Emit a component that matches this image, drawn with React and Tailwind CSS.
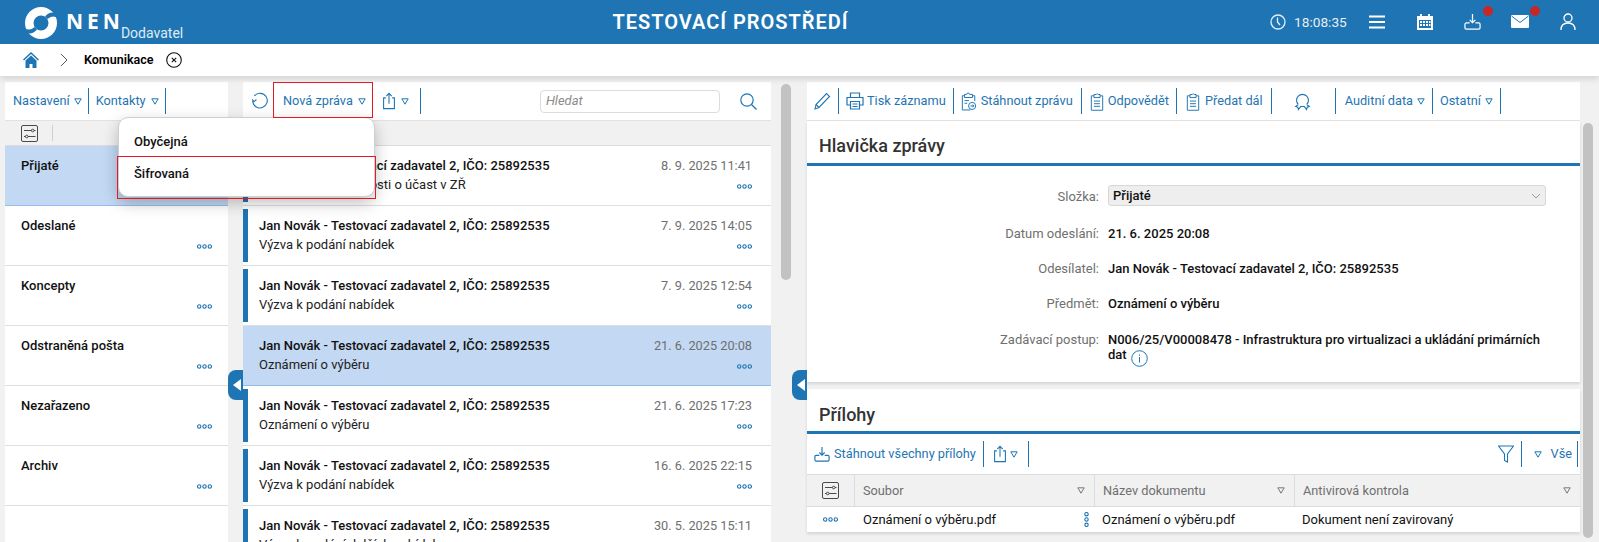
import React from "react";

const Tri = ({ className = "", color = "#1f75b3" }) => (
  <svg width="8" height="7" viewBox="0 0 8 7" className={className}>
    <path d="M.8.8h6.400L4 6.200z" fill="none" stroke={color} strokeWidth="1" />
  </svg>
);
const Sep = ({ className = "mx-[7px]" }) => <span className={`h-[26px] w-px shrink-0 bg-[#1f75b3] ${className}`} />;
const Dots = ({ className = "" }) => (
  <svg width="15" height="5" viewBox="0 0 15 5" className={className}>
    {[2.2, 7.5, 12.8].map((x) => (
      <circle key={x} cx={x} cy="2.5" r="1.7" fill="none" stroke="#1f75b3" strokeWidth="1.1" />
    ))}
  </svg>
);
const Share = ({ s = 20 }) => (
  <svg width={s} height={s} viewBox="0 0 20 20" fill="none" stroke="#1f75b3" strokeWidth="1.2">
    <path d="M6.5 6.5H4v12h12v-12h-2.500M10 13V1.500M7 4.500l3-3 3 3" />
  </svg>
);
const Sliders = () => (
  <svg width="17" height="17" viewBox="0 0 17 17" fill="none" stroke="#4a4a4a" strokeWidth="1">
    <rect x="0.5" y="0.5" width="16" height="16" rx="1.5" />
    <path d="M3 5.500h7.500M13 5.500h1.500M3 11.500h1.500M7 11.500h7.500" />
    <circle cx="11.7" cy="5.5" r="1.3" />
    <circle cx="5.7" cy="11.5" r="1.3" />
  </svg>
);
const Clip = ({ arrow }) => (
  <svg width={arrow ? 16 : 14} height="19" viewBox={arrow ? "0 0 18 21" : "0 0 16 21"} fill="none" stroke="#1f75b3" strokeWidth="1.100">
    {arrow ? (
      <>
        <path d="M4 4H1.500v16h9M13 4h2.500v6M4 2.500h2.500a1.500 1.500 0 0 1 3 0H13V6H4z" />
        <path d="M4 9.500h5M4 12.500h3" />
        <circle cx="12.500" cy="15.500" r="4" fill="#fff" />
        <path d="M10.500 15.500h4M13 14l1.500 1.500L13 17" />
      </>
    ) : (
      <>
        <path d="M4.500 4H1.500v16.500h13V4h-3M4.500 2.500H7a1.300 1.300 0 0 1 2.400 0h2.100V6h-7z" />
        <path d="M4.500 10h7M4.500 13h7M4.500 16h7" />
      </>
    )}
  </svg>
);
const Ribbon = () => (
  <svg width="17" height="19" viewBox="0 0 20 22" fill="none" stroke="#1f75b3" strokeWidth="1.3">
    <path d="M5 14.500a7 7 0 1 1 10 0M5 14.500 2 17l2.500.7.7 2.800 3-4M15 14.500l3 2.500-2.500.7-.7 2.800-3-4M8.200 16.500c1.200.4 2.400.4 3.600 0" />
  </svg>
);
const Tray = ({ color = "#1f75b3", s = 18 }) => (
  <svg width={s} height={s} viewBox="0 0 18 18" fill="none" stroke={color} strokeWidth="1.3">
    <path d="M9 1v9M6 7.300 9 10.300l3-3M6 10.500H2.500a1.500 1.500 0 0 0-1.500 1.500v3.500A1.500 1.500 0 0 0 2.500 17h13a1.500 1.500 0 0 0 1.500-1.500V12a1.500 1.500 0 0 0-1.500-1.500H12" />
  </svg>
);

const folders = ["Přijaté", "Odeslané", "Koncepty", "Odstraněná pošta", "Nezařazeno", "Archiv"];
const sender = "Jan Novák - Testovací zadavatel 2, IČO: 25892535";
const msgs = [
  [sender, "8. 9. 2025 11:41", "Výzva k podání žádosti o účast v ZŘ"],
  [sender, "7. 9. 2025 14:05", "Výzva k podání nabídek"],
  [sender, "7. 9. 2025 12:54", "Výzva k podání nabídek"],
  [sender, "21. 6. 2025 20:08", "Oznámení o výběru", true],
  [sender, "21. 6. 2025 17:23", "Oznámení o výběru"],
  [sender, "16. 6. 2025 22:15", "Výzva k podání nabídek"],
  [sender, "30. 5. 2025 15:11", "Výzva k podání dalších nabídek"],
];

const Row = ({ label, children, top = false }) => (
  <div className={`flex ${top ? "items-start pt-[4px]" : "items-center"} min-h-[20px]`}>
    <div className="w-[301px] shrink-0 pr-[9px] text-right leading-[15px] text-[#6f6f6f]">{label}</div>
    <div className="flex-1 leading-[15px] font-medium text-[#111]">{children}</div>
  </div>
);

const Collapse = () => (
  <div className="absolute z-10 flex h-[30px] w-[15px] items-center justify-center rounded-l-[8px] bg-[#1f75b3]">
    <span className="ml-[3px] h-0 w-0 border-y-[6px] border-r-[8px] border-y-transparent border-r-white" />
  </div>
);

export default function App() {
  return (
    <div className="relative h-[542px] w-[1599px] overflow-hidden bg-[#f1f1f1] font-['Roboto',sans-serif] text-[13px] text-[#111]">
      <header className="relative flex h-[44px] items-center bg-[#1f75b3] text-white">
        <div className="flex w-[400px] items-center pl-[24px]">
          <svg width="34" height="34" viewBox="0 0 34 34" className="mt-[1px]">
            <path fillRule="evenodd" d="M17 1a16 16 0 1 1 0 32 16 16 0 0 1 0-32zM17 9.500a7.500 7.500 0 1 0 0 15 7.500 7.500 0 0 0 0-15z" fill="#fff" />
            <path d="M21 10.500Q27 3.500 35 9L34 12Q28 8.500 23.500 13z" fill="#1f75b3" />
            <path d="M13 23.500Q7 30.500-1 25L0 22Q6 25.500 10.500 21z" fill="#1f75b3" />
          </svg>
          <span className="ml-[8px] font-['Open_Sans',sans-serif] text-[21px] font-bold tracking-[4px]">NEN</span>
          <span className="mt-[21px] ml-[-3px] text-[14px] leading-none text-[#dfeaf5]">Dodavatel</span>
        </div>
        <div className="ml-[-208px] flex-1 text-center text-[20px] font-semibold tracking-[1px]">
          TESTOVACÍ PROSTŘEDÍ
        </div>
        <div className="flex w-[330px] items-center text-[13.700px] text-[#e6eff7]">
          <svg width="16" height="16" viewBox="0 0 16 16" fill="none" stroke="#e6eff7" strokeWidth="1.3" className="ml-px">
            <circle cx="8" cy="8" r="7" />
            <path d="M7.500 3.500V8l2.500 3" />
          </svg>
          <span className="ml-[8px] w-[75px]">18:08:35</span>
          <svg width="16" height="14" viewBox="0 0 16 14" stroke="#fff" strokeWidth="2">
            <path d="M0 1.500h16M0 7h16M0 12.500h16" />
          </svg>
          <svg width="16" height="16" viewBox="0 0 16 16" className="ml-[32px]">
            <path d="M3 0h2v2h6V0h2v2h3v14H0V2h3z" fill="#fff" />
            <path d="M2 6h12v8H2z" fill="#1f75b3" />
            <path d="M3 7h2v2H3zM6 7h2v2H6zM9 7h2v2H9zM12 7h1.500v2H12zM3 10h2v2H3zM6 10h2v2H6zM9 10h2v2H9zM12 10h1.500v2H12z" fill="#fff" />
          </svg>
          <div className="relative ml-[31px]">
            <Tray color="#fff" s={17} />
            <span className="absolute top-[-7px] left-[19px] h-[10px] w-[10px] rounded-full bg-[#c62828]" />
          </div>
          <div className="relative ml-[30px]">
            <svg width="18" height="13" viewBox="0 0 18 13">
              <rect width="18" height="13" rx="1" fill="#fff" />
              <path d="M0.500 1 9 7.500 17.500 1" fill="none" stroke="#1f75b3" strokeWidth="1" />
            </svg>
            <span className="absolute top-[-9px] left-[19px] h-[10px] w-[10px] rounded-full bg-[#c62828]" />
          </div>
          <svg width="16" height="17" viewBox="0 0 16 17" fill="none" stroke="#fff" strokeWidth="1.3" className="ml-[31px]">
            <circle cx="8" cy="5" r="4" />
            <path d="M1 17c0-4.500 2.500-7 7-7s7 2.500 7 7" />
          </svg>
        </div>
      </header>

      <nav className="relative z-[1] flex h-[32px] items-center bg-white pl-[23px] shadow-[0_3px_6px_rgba(0,0,0,0.12)]">
        <svg width="16" height="16" viewBox="0 0 16 16">
          <path d="M8 0 0 7.500l1 1L8 2l7 6.500 1-1z" fill="#1f75b3" />
          <path d="M2.500 8.500 8 3.500l5.500 5V16H9.500v-4h-3v4h-4z" fill="#1f75b3" />
        </svg>
        <svg width="8" height="14" viewBox="0 0 8 14" fill="none" stroke="#555" className="ml-[21px]">
          <path d="M1 1l6 6-6 6" />
        </svg>
        <span className="ml-[16px] text-[12.500px] font-semibold text-black">Komunikace</span>
        <svg width="16" height="16" viewBox="0 0 16 16" fill="none" stroke="#111" strokeWidth="1.100" className="ml-[13px]">
          <circle cx="8" cy="8" r="7.300" />
          <path d="M5.800 5.800l4.400 4.400M10.200 5.800l-4.400 4.400" />
        </svg>
      </nav>

      <main className="relative flex h-[466px] pt-[6px]">
        {/* folders */}
        <section className="ml-[5px] flex h-full w-[223px] shrink-0 flex-col bg-white">
          <div className="flex h-[39px] shrink-0 items-center border-b border-[#e2e2e2] pl-[8px] text-[12.750px] text-[#1f75b3]">
            <span>Nastavení</span>
            <Tri className="ml-[4px]" />
            <Sep className="mr-[7px] ml-[6px]" />
            <span>Kontakty</span>
            <Tri className="ml-[5px]" />
            <Sep className="ml-[6px]" />
          </div>
          <div className="flex h-[25px] shrink-0 items-center border-b border-[#dcdcdc] bg-[#f1f1f1] pl-[16px]">
            <Sliders />
            <span className="ml-[14px] h-[16px] w-px bg-[#cfcfcf]" />
          </div>
          {folders.map((f, i) => (
            <div
              key={f}
              className={`h-[60px] shrink-0 border-b px-[16px] pt-[11px] ${i === 0 ? "border-[#94bde8] bg-[#c2d8f3]" : "border-[#dfdfdf] bg-white"}`}
            >
              <div className="leading-[18px] font-medium text-[#111]">{f}</div>
              <div className="mt-[9px] flex justify-end">
                <Dots />
              </div>
            </div>
          ))}
        </section>

        {/* messages */}
        <section className="ml-[15px] flex h-full w-[528px] shrink-0 flex-col">
          <div className="flex h-[39px] shrink-0 items-center border-b border-[#e2e2e2] bg-white pl-[8px] text-[12.750px] text-[#1f75b3]">
            <svg width="18" height="18" viewBox="0 0 16 16" fill="none" stroke="#1f75b3" strokeWidth="1">
              <path d="M3 3.500A6.500 6.500 0 1 1 1.500 8M1 6.500l1.800 2 2-1.800" />
            </svg>
            <Sep className="mx-[4px]" />
            <span className="ml-[5px]">Nová zpráva</span>
            <Tri className="ml-[5px]" />
            <span className="ml-[14px]">
              <Share s={18} />
            </span>
            <Tri className="ml-[3px]" />
            <Sep className="mr-[7px] ml-[11px]" />
            <div className="ml-[112px] flex h-[23px] w-[180px] items-center rounded-[4px] border border-[#dcdcdc] pl-[5px] text-[13px] text-[#8c8c8c] italic">
              Hledat
            </div>
            <svg width="17" height="17" viewBox="0 0 17 17" fill="none" stroke="#1f75b3" strokeWidth="1.200" className="ml-[20px]">
              <circle cx="7" cy="7" r="6.200" />
              <path d="m11.500 11.500 5 5" />
            </svg>
          </div>
          <div className="h-[25px] shrink-0 border-b border-[#dcdcdc] bg-[#f1f1f1]" />
          {msgs.map(([from, date, subj, sel]) => (
            <div
              key={date}
              className={`relative flex h-[60px] shrink-0 border-b-[1px] pt-[11px] pr-[19px] pl-[16px] ${sel ? "border-[#94bde8] bg-[#c2d8f3]" : "border-[#dfdfdf] bg-white"}`}
            >
              {!sel && <span className="absolute top-[3px] bottom-[3px] left-0 w-[5px] bg-[#1f75b3]" />}
              <div className="flex-1">
                <div className="leading-[18px] font-medium text-[#111]">{from}</div>
                <div className="mt-px leading-[18px] text-[#222]">{subj}</div>
              </div>
              <div className="flex flex-col items-end">
                <div className="text-[12.750px] leading-[18px] text-[#6f6f6f]">{date}</div>
                <Dots className="mt-[9px]" />
              </div>
            </div>
          ))}
        </section>

        <div className="relative ml-[10px] h-full w-[10px] shrink-0">
          <div className="absolute top-[2px] left-0 h-[196px] w-[10px] rounded-[5px] bg-[#c2c2c2]" />
        </div>

        {/* detail */}
        <section className="ml-[16px] flex h-full w-[773px] shrink-0 flex-col">
          <div className="flex h-[39px] shrink-0 items-center border-b border-[#e2e2e2] bg-white pl-[7px] text-[12.750px] text-[#1f75b3]">
            <svg width="17" height="18" viewBox="0 0 17 18" fill="none" stroke="#1f75b3" strokeWidth="1.100">
              <path d="M1 17l1-4.500L12.500 1.500 15.500 4.500 5 15.500z M2 12.500l3 3" />
            </svg>
            <Sep className="mx-[7px]" />
            <svg width="18" height="18" viewBox="0 0 18 18" fill="none" stroke="#1f75b3" strokeWidth="1.200">
              <path d="M4.500 5V1h9v4M4.500 13H1V5.500h16V13h-3.500M4.500 9.500h9V17h-9zM6.500 12h5M6.500 14.500h5" />
            </svg>
            <span className="ml-[3px]">Tisk záznamu</span>
            <Sep className="mx-[7px]" />
            <Clip arrow />
            <span className="ml-[4px]">Stáhnout zprávu</span>
            <Sep className="mx-[8px]" />
            <Clip />
            <span className="ml-[4px]">Odpovědět</span>
            <Sep className="mr-[9px] ml-[7px]" />
            <Clip />
            <span className="ml-[5px]">Předat dál</span>
            <Sep className="mx-[8px]" />
            <span className="ml-[14px]">
              <Ribbon />
            </span>
            <Sep className="mr-[9px] ml-[24px]" />
            <span>Auditní data</span>
            <Tri className="ml-[4px]" />
            <Sep />
            <span>Ostatní</span>
            <Tri className="ml-[4px]" />
            <Sep />
          </div>

          <div className="flex h-[261px] shrink-0 flex-col bg-white shadow-[0_2px_3px_rgba(0,0,0,0.12)]">
            <h2 className="flex h-[45px] shrink-0 items-center border-b-[3px] border-[#1f75b3] pt-[7px] pl-[12px] text-[18px] font-medium text-[#333]">
              Hlavička zprávy
            </h2>
            <div className="flex flex-col gap-[15px] pt-[19px] pr-[28px]">
              <Row label="Složka:">
                <div className="mb-[2px] flex h-[21px] w-[438px] items-center justify-between rounded-[3px] border border-[#d8d8d8] bg-[#eeeeee] px-[4px]">
                  <span className="font-medium">Přijaté</span>
                  <svg width="10" height="6" viewBox="0 0 10 6" fill="none" stroke="#999">
                    <path d="M1 1l4 4 4-4" />
                  </svg>
                </div>
              </Row>
              <Row label="Datum odeslání:">21. 6. 2025 20:08</Row>
              <Row label="Odesílatel:">{sender}</Row>
              <Row label="Předmět:">Oznámení o výběru</Row>
              <Row label="Zadávací postup:" top>
                N006/25/V00008478 - Infrastruktura pro virtualizaci a ukládání primárních dat{" "}
                <svg width="17" height="17" viewBox="0 0 17 17" fill="none" stroke="#1f75b3" className="my-[-4px] ml-[1px] inline align-[-4px]">
                  <circle cx="8.500" cy="8.500" r="7.800" />
                  <path d="M8.500 7v5.500M8.500 4.500v1.300" />
                </svg>
              </Row>
            </div>
          </div>

          <div className="mt-[7px] flex flex-1 flex-col">
            <div className="bg-white shadow-[0_2px_3px_rgba(0,0,0,0.12)]">
              <h2 className="flex h-[45px] items-center border-b-[3px] border-[#1f75b3] pt-[8px] pl-[12px] text-[18px] font-medium text-[#333]">
                Přílohy
              </h2>
              <div className="flex h-[40px] items-center pr-[2px] pl-[7px] text-[12.750px] text-[#1f75b3]">
                <Tray s={16} />
                <span className="ml-[4px]">Stáhnout všechny přílohy</span>
                <Sep />
                <Share s={18} />
                <Tri className="ml-px" />
                <Sep className="mr-[7px] ml-[10px]" />
                <span className="flex-1" />
                <svg width="16" height="18" viewBox="0 0 16 18" fill="none" stroke="#1f75b3" strokeWidth="1.100" className="mr-[2px]">
                  <path d="M0.500 1h15L9.500 9v8l-3-1.500V9z" />
                </svg>
                <Sep className="mx-[5px]" />
                <Tri className="ml-[7px]" />
                <span className="ml-[9px]">Vše</span>
                <span className="ml-[5px] h-[26px] w-px bg-[#1f75b3]" />
              </div>
              <div className="flex h-[33px] border-y-[1.500px] border-[#dcdcdc] bg-[#f1f1f1] text-[12.750px] text-[#6f6f6f]">
                <div className="flex w-[47px] items-center justify-center">
                  <Sliders />
                </div>
                <div className="flex w-[240px] items-center justify-between border-l border-[#dcdcdc] pr-[9px] pl-[8px]">
                  Soubor
                  <Tri color="#777" />
                </div>
                <div className="flex w-[200px] items-center justify-between border-l border-[#dcdcdc] pr-[9px] pl-[8px]">
                  Název dokumentu
                  <Tri color="#777" />
                </div>
                <div className="flex w-[286px] items-center justify-between border-l border-[#dcdcdc] pr-[9px] pl-[8px]">
                  Antivirová kontrola
                  <Tri color="#777" />
                </div>
              </div>
              <div className="flex h-[25px] items-center text-[#111]">
                <div className="flex w-[47px] justify-center">
                  <Dots />
                </div>
                <div className="flex w-[240px] items-center justify-between pr-0 pl-[9px]">
                  Oznámení o výběru.pdf
                  <Dots className="rotate-90" />
                </div>
                <div className="w-[200px] pl-[8px]">Oznámení o výběru.pdf</div>
                <div className="w-[286px] pl-[8px]">Dokument není zavirovaný</div>
              </div>
            </div>
          </div>
        </section>

        <div className="relative ml-[3px] h-full w-[10px] shrink-0">
          <div className="absolute top-[41px] left-0 h-[415px] w-[10px] rounded-[5px] bg-[#c2c2c2]" />
        </div>

        {/* Collapse handles */}
        <div className="absolute top-[294px] left-[228px] h-0 w-0">
          <Collapse />
        </div>
        <div className="absolute top-[294px] left-[792px] h-0 w-0">
          <Collapse />
        </div>
      </main>

      {/* dropdown */}
      <div className="absolute top-[117px] left-[118px] z-20 h-[80px] w-[257px] rounded-[10px] border border-[#cfcfcf] bg-white pt-[8px] font-medium shadow-[0_6px_16px_rgba(0,0,0,0.25)]">
        <div className="h-[32px] pl-[15px] leading-[32px] text-[#111]">Obyčejná</div>
        <div className="h-[32px] pl-[15px] leading-[32px] text-[#111]">Šifrovaná</div>
      </div>
      <div className="pointer-events-none absolute top-[156px] left-[117px] z-30 h-[43px] w-[259px] border border-[#e01b24]" />
      <div className="pointer-events-none absolute top-[82px] left-[273px] z-30 h-[36px] w-[100px] border border-[#e01b24]" />
    </div>
  );
}
